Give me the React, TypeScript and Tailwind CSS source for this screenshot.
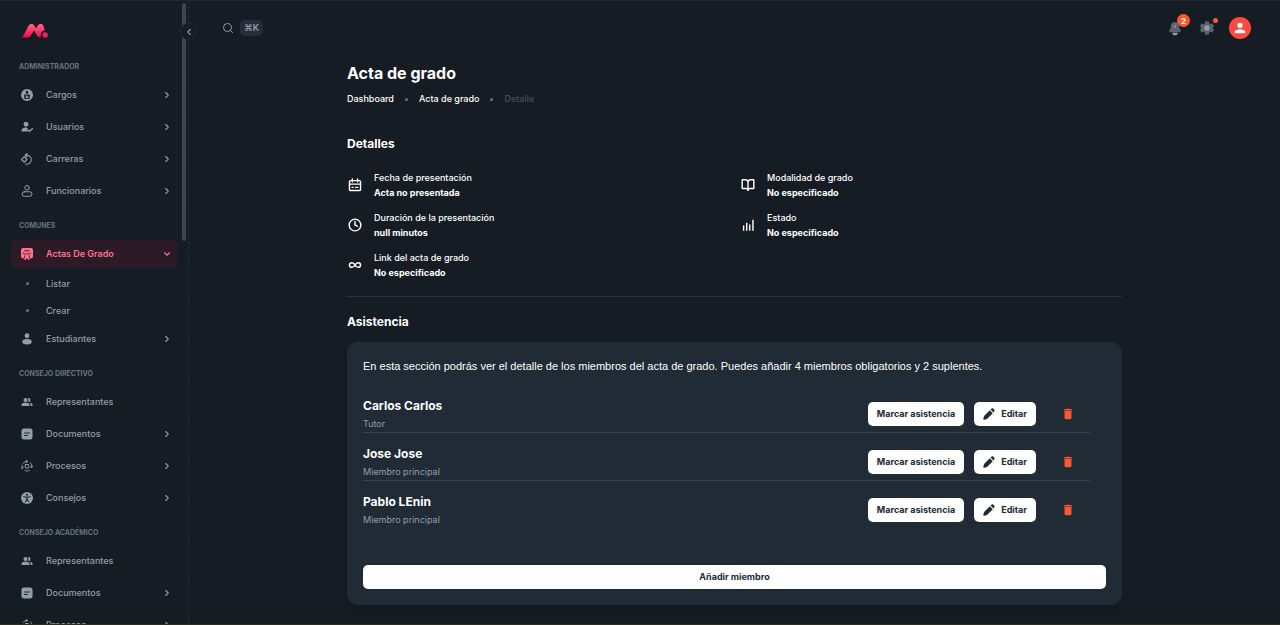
import React from 'react';
import type { IconType } from 'react-icons';
import { MdDelete, MdPeopleAlt, MdPerson } from 'react-icons/md';
import { BookOpen, ChevronDown, ChevronLeft, ChevronRight, Clock, Search } from 'lucide-react';

type Glyph = () => React.ReactElement;

const svgBase = { viewBox: '0 0 24 24', className: 'size-full', 'aria-hidden': true } as const;
const line = {
  fill: 'none',
  stroke: 'currentColor',
  strokeWidth: 2,
  strokeLinecap: 'round',
  strokeLinejoin: 'round',
} as const;

const CargoIcon: Glyph = () => (
  <svg {...svgBase}>
    <path
      fill="currentColor"
      fillRule="evenodd"
      d="M12 0a12 12 0 1 0 0 24 12 12 0 0 0 0-24Zm0 3.500a2.500 2.500 0 0 1 2.500 2.500v1a2.500 2.500 0 0 1-5 0V6A2.500 2.500 0 0 1 12 3.500ZM6.500 11h11v9h-11v-9Zm3 2v5.500h5.500V15h-2.500v-2h-3Z"
    />
  </svg>
);

const UserCheckIcon: Glyph = () => (
  <svg {...svgBase}>
    <circle cx="10" cy="6.500" r="4.800" fill="currentColor" />
    <path fill="currentColor" d="M1 21c0-5 3-8 8-8 2 0 4 .5 5 1.500l-2 2.500 4 4H1Z" />
    <path {...line} strokeWidth={2.400} d="m15 18 2.500 2.500L23 15" />
  </svg>
);

const CareerIcon: Glyph = () => (
  <svg {...svgBase}>
    <path
      {...line}
      strokeWidth={2.200}
      d="M10 4.500a9 9 0 1 1-1 17.500M1 13l5.500-5.500L12 13l-5.500 5.500L1 13ZM12 1 8.500 4.500 12 8M8.500 4.500H13"
    />
  </svg>
);

const OfficialIcon: Glyph = () => (
  <svg {...svgBase}>
    <circle cx="12" cy="5.500" r="4.500" {...line} />
    <rect x="2" y="13.500" width="20" height="9" rx="4.500" {...line} />
  </svg>
);

const ActaIcon: Glyph = () => (
  <svg {...svgBase}>
    <path
      fill="currentColor"
      fillRule="evenodd"
      d="M4 0h16a4 4 0 0 1 4 4v13a4 4 0 0 1-4 4h-1l-2-5a6 6 0 0 0-10 0l-2 5H4a4 4 0 0 1-4-4V4a4 4 0 0 1 4-4Zm3 4.500v2h10v-2H7ZM4 9.500v2h3v-2H4Zm13 0v2h3v-2h-3Z"
    />
    <path fill="currentColor" d="M12 10a4 4 0 0 1 3.500 6l2.500 7-3 1-3-4-3 4-3-1 2.500-7A4 4 0 0 1 12 10Z" />
    <path d="M7.500 15c-1-5 10-5 9 0" fill="none" stroke="#2c1a27" strokeWidth="1.500" />
  </svg>
);

const StudentIcon: Glyph = () => (
  <svg {...svgBase}>
    <circle cx="12" cy="5.500" r="4.800" fill="currentColor" />
    <ellipse cx="12" cy="17.500" rx="9.500" ry="5.500" fill="currentColor" />
  </svg>
);

const DocumentIcon: Glyph = () => (
  <svg {...svgBase}>
    <rect x="1" y="1" width="22" height="22" rx="5" fill="currentColor" />
    <path d="M7 10h10M7 15h6" fill="none" stroke="#161c24" strokeWidth="1.800" strokeLinecap="round" />
  </svg>
);

const ProcessIcon: Glyph = () => (
  <svg {...svgBase}>
    <path
      {...line}
      strokeWidth={1.800}
      d="M4 7a10 10 0 0 1 9-4.500M10 .500l3 2-2.500 3M19 5.500a10 10 0 0 1 2.500 9M23 12l-1.500 3-3-1M17 21a10 10 0 0 1-9 .5M2.500 17A10 10 0 0 1 2 11M.500 16l2.500 1 1.500-3"
    />
    <rect x="8.500" y="9" width="7" height="7" rx="1" {...line} />
  </svg>
);

const CouncilIcon: Glyph = () => (
  <svg {...svgBase}>
    <circle cx="12" cy="12" r="12" fill="currentColor" />
    <circle cx="12" cy="5.500" r="2" fill="#161c24" />
    <path
      d="m5.500 9 4.500 1.500h4L18.500 9M12 10.500V15m-3 5 3-6 3 6"
      fill="none"
      stroke="#161c24"
      strokeWidth="2"
      strokeLinecap="round"
    />
  </svg>
);

const CalendarIcon: Glyph = () => (
  <svg {...svgBase}>
    <path
      {...line}
      strokeWidth={2.400}
      d="M4.500 4.500h15a2 2 0 0 1 2 2v13a2 2 0 0 1-2 2h-15a2 2 0 0 1-2-2v-13a2 2 0 0 1 2-2ZM7.500 1.500v5M16.500 1.500v5M2.500 10.500h19M7 16h2M13 16h4"
    />
  </svg>
);

const LinkIcon: Glyph = () => (
  <svg {...svgBase}>
    <path
      {...line}
      strokeWidth={2.600}
      d="M12 12c-1.500-3-3-4-5.500-4a4 4 0 0 0 0 8c2.500 0 4-1 5.500-4s3-4 5.500-4a4 4 0 0 1 0 8c-2.500 0-4-1-5.500-4Z"
    />
  </svg>
);

const BarsIcon: Glyph = () => (
  <svg {...svgBase}>
    <path d="M4.500 13v9M9.800 8v14M15 11v11M20.500 3v19" fill="none" stroke="currentColor" strokeWidth="2.400" />
  </svg>
);

const PencilIcon: Glyph = () => (
  <svg {...svgBase}>
    <path
      fill="currentColor"
      d="M13.500 4.500 19.500 10.500 8.500 21.500c-.8.800-5 2-7.800 2 0-2.800 1.200-7 2-7.800L13.500 4.500ZM15 3l1-1c2-2 4.300-1.500 5.700-.1s1.900 3.900 0 5.800L21 9 15 3Z"
    />
  </svg>
);

const wrap = (Icon: IconType): Glyph => () => <Icon className="size-full" aria-hidden />;
const PeopleIcon = wrap(MdPeopleAlt);

type Item = { label: string; icon: Glyph; expandable?: boolean; children?: string[] };
type Section = { title: string; items: Item[] };

const sections: Section[] = [
  {
    title: 'Administrador',
    items: [
      { label: 'Cargos', icon: CargoIcon, expandable: true },
      { label: 'Usuarios', icon: UserCheckIcon, expandable: true },
      { label: 'Carreras', icon: CareerIcon, expandable: true },
      { label: 'Funcionarios', icon: OfficialIcon, expandable: true },
    ],
  },
  {
    title: 'Comunes',
    items: [
      { label: 'Actas De Grado', icon: ActaIcon, expandable: true, children: ['Listar', 'Crear'] },
      { label: 'Estudiantes', icon: StudentIcon, expandable: true },
    ],
  },
  {
    title: 'Consejo directivo',
    items: [
      { label: 'Representantes', icon: PeopleIcon },
      { label: 'Documentos', icon: DocumentIcon, expandable: true },
      { label: 'Procesos', icon: ProcessIcon, expandable: true },
      { label: 'Consejos', icon: CouncilIcon, expandable: true },
    ],
  },
  {
    title: 'Consejo académico',
    items: [
      { label: 'Representantes', icon: PeopleIcon },
      { label: 'Documentos', icon: DocumentIcon, expandable: true },
      { label: 'Procesos', icon: ProcessIcon, expandable: true },
    ],
  },
];

function NavItem({ item }: { item: Item }) {
  const open = Boolean(item.children);
  const Icon = item.icon;
  return (
    <li>
      <button
        type="button"
        aria-expanded={item.expandable ? open : undefined}
        className={
          open
            ? 'flex h-7 w-full items-center rounded-md bg-[#2c1a27] pr-[5px] pl-2.5 text-[9px] font-semibold text-[#ff708b]'
            : 'flex h-7 w-full items-center rounded-md pr-[5px] pl-2.5 text-[9px] font-medium text-[#919eab]'
        }
      >
        <span className="mr-[13px] size-3 shrink-0">
          <Icon />
        </span>
        <span className="flex-1 text-left">{item.label}</span>
        {item.expandable &&
          (open ? (
            <ChevronDown className="size-2.5" strokeWidth={2.600} />
          ) : (
            <ChevronRight className="size-2.5" strokeWidth={2.600} />
          ))}
      </button>
      {item.children && (
        <ul className="mt-0.5 -mb-[3px]">
          {item.children.map((child) => (
            <li key={child}>
              <a href="#" className="flex h-[27px] items-center pl-2.5 text-[9px] font-medium text-[#919eab]">
                <span className="mr-[13px] flex w-3 justify-center">
                  <span className="size-[3px] rounded-full bg-[#637381]" />
                </span>
                {child}
              </a>
            </li>
          ))}
        </ul>
      )}
    </li>
  );
}

function Sidebar() {
  return (
    <aside className="relative flex w-[189px] shrink-0 border-r border-dashed border-[#252d36]">
      <div className="flex-1 overflow-hidden px-[11px]">
        <a href="#" aria-label="Inicio" className="mt-[22px] ml-[11px] block w-[26px]">
          <svg viewBox="0 0 26 15" className="h-[15px] w-[26px]" aria-hidden>
            <defs>
              <linearGradient id="brand" x1="0" y1="0" x2="0" y2="1">
                <stop offset="0" stopColor="#ff6685" />
                <stop offset="1" stopColor="#f5064a" />
              </linearGradient>
            </defs>
            <path
              fill="url(#brand)"
              d="M.4 14.600 6.500 2.800C7.600.7 10.500.2 12 2.200l2 3 2-2.800C17.600.2 20.500.5 21.500 2.800l1.200 4.500c-2.300.3-3.800 2.100-3.800 4.400 0 .9.200 1.600-.3 2.100-1 .8-2.200.5-3-.6L12 7.500l-3.200 5c-1 1.600-2.300 2.100-3.800 2.100H.4Z"
            />
            <circle cx="23.200" cy="12" r="2.700" fill="#fb1e56" />
          </svg>
        </a>
        <nav aria-label="Principal" className="mt-[13px]">
          {sections.map((section) => (
            <section key={section.title} className="mb-[5px]">
              <h2 className="px-2 pt-2.5 pb-2 text-[7px] leading-3 font-bold text-[#637381] uppercase">{section.title}</h2>
              <ul className="flex flex-col gap-1">
                {section.items.map((item) => (
                  <NavItem key={item.label} item={item} />
                ))}
              </ul>
            </section>
          ))}
        </nav>
      </div>
      <div className="absolute top-0.5 right-[2px] h-[238px] w-1 rounded-full bg-[#3b4651]" />
      <button
        type="button"
        aria-label="Contraer menú"
        className="absolute top-[22px] -right-[9px] flex size-[17px] items-center justify-center rounded-full border border-dashed border-[#29323b] bg-[#161c24] text-[#919eab]"
      >
        <ChevronLeft className="size-2.5" strokeWidth={2.600} />
      </button>
    </aside>
  );
}

function TopBar() {
  return (
    <header className="flex h-[54px] shrink-0 items-center justify-between pr-[29px] pl-[33px]">
      <div className="flex items-center gap-1.5">
        <button type="button" aria-label="Buscar" className="text-[#919eab]">
          <Search className="size-3" />
        </button>
        <kbd className="flex h-4 items-center rounded-[5px] bg-[#252d37] px-1 font-[Inter,'DejaVu_Sans',sans-serif] text-[9px] font-semibold text-[#919eab]">
          ⌘K
        </kbd>
      </div>
      <div className="flex items-center gap-4">
        <button type="button" aria-label="Notificaciones" className="relative size-4">
          <svg viewBox="0 0 24 24" className="size-4" aria-hidden>
            <path
              fill="#59636e"
              d="M12 3a6.500 6.500 0 0 0-6.500 6.500V12l-2 3.500c-.8 1.500 0 3 1.800 3h13.400c1.800 0 2.600-1.500 1.800-3l-2-3.500V9.500A6.500 6.500 0 0 0 12 3Z"
            />
            <path fill="#919eab" d="M8 19h8a4 4 0 0 1-8 0ZM11 7h2v5h-2z" />
          </svg>
          <span className="absolute -top-1.5 -right-[7px] flex size-[13px] items-center justify-center rounded-full bg-[#ff5630] text-[8px] font-bold text-white">
            2
          </span>
        </button>
        <button type="button" aria-label="Ajustes" className="relative size-4">
          <svg viewBox="0 0 24 24" className="size-4" aria-hidden>
            <path
              fill="#59636e"
              d="M9.500 2h5l.7 3 2 1.200 3-.9 2.400 4.200L20.400 12l2.200 2.500-2.400 4.200-3-.9-2 1.200-.7 3h-5l-.7-3-2-1.200-3 .9-2.400-4.200L3.600 12 1.400 9.500l2.400-4.200 3 .9 2-1.200.7-3Z"
            />
            <circle cx="12" cy="12" r="4" fill="#919eab" />
          </svg>
          <span className="absolute -top-0.5 -right-[3px] size-[5px] rounded-full bg-[#ff5630]" />
        </button>
        <button
          type="button"
          aria-label="Cuenta"
          className="-ml-0.5 flex size-[22px] items-center justify-center rounded-full bg-[#ff4842] text-white"
        >
          <MdPerson className="size-4" />
        </button>
      </div>
    </header>
  );
}

const ClockIcon: Glyph = () => <Clock className="size-full" strokeWidth={2.400} aria-hidden />;
const BookIcon: Glyph = () => <BookOpen className="size-full" strokeWidth={2.400} aria-hidden />;

const detailColumns: { label: string; value: string; icon: Glyph }[][] = [
  [
    { label: 'Fecha de presentación', value: 'Acta no presentada', icon: CalendarIcon },
    { label: 'Duración de la presentación', value: 'null minutos', icon: ClockIcon },
    { label: 'Link del acta de grado', value: 'No especificado', icon: LinkIcon },
  ],
  [
    { label: 'Modalidad de grado', value: 'No especificado', icon: BookIcon },
    { label: 'Estado', value: 'No especificado', icon: BarsIcon },
  ],
];

const members = [
  { name: 'Carlos Carlos', role: 'Tutor' },
  { name: 'Jose Jose', role: 'Miembro principal' },
  { name: 'Pablo LEnin', role: 'Miembro principal' },
];

const buttonClass =
  'flex h-6 items-center justify-center rounded-[5px] bg-white px-[9px] text-[9px] font-bold whitespace-nowrap text-[#212b36]';

export default function App() {
  return (
    <div className="flex h-screen overflow-hidden border-t border-b border-t-[#212830] border-b-[#2c2d1e] bg-[#161c24] font-[Inter,'Liberation_Sans',sans-serif] text-white">
      <Sidebar />
      <div className="flex min-w-0 flex-1 flex-col">
        <TopBar />
        <main className="mx-auto w-full max-w-[807px] px-4 pt-2 pb-4">
          <h1 className="text-base leading-5 font-bold">Acta de grado</h1>
          <nav aria-label="Ruta" className="mt-2 flex h-4 items-center gap-[11px] text-[9px] font-medium">
            <a href="#">Dashboard</a>
            <span className="size-[3px] rounded-full bg-[#637381]" />
            <a href="#">Acta de grado</a>
            <span className="size-[3px] rounded-full bg-[#637381]" />
            <span className="text-[#454f5b]">Detalle</span>
          </nav>

          <h2 className="mt-[29px] text-xs leading-4 font-bold">Detalles</h2>
          <div className="mt-[18px] grid grid-cols-2 gap-x-[11px] border-b border-[#29323b] pb-4">
            {detailColumns.map((column, index) => (
              <dl key={index} className="flex flex-col gap-2.5">
                {column.map(({ label, value, icon: Icon }) => (
                  <div key={label} className="grid grid-cols-[16px_1fr] items-center gap-x-[11px] text-[9px] leading-[15px]">
                    <dt className="col-start-2 font-medium">{label}</dt>
                    <dd className="col-start-2 font-bold">{value}</dd>
                    <dd className="col-start-1 row-span-2 row-start-1 size-4 p-px" aria-hidden>
                      <Icon />
                    </dd>
                  </div>
                ))}
              </dl>
            ))}
          </div>

          <h2 className="mt-[17px] text-xs leading-4 font-bold">Asistencia</h2>
          <section className="mt-3 rounded-[11px] bg-[#212b36] p-4 shadow-lg">
            <p className="font-['Liberation_Sans',Arial,sans-serif] text-[11px] leading-4">
              En esta sección podrás ver el detalle de los miembros del acta de grado. Puedes añadir 4 miembros obligatorios y 2
              suplentes.
            </p>
            <ul className="mt-[11px] mr-4">
              {members.map((member) => (
                <li
                  key={member.name}
                  className="flex h-12 items-end justify-between border-b border-[#37424d] last:border-transparent"
                >
                  <div>
                    <h3 className="text-xs leading-5 font-bold">{member.name}</h3>
                    <p className="text-[9px] leading-4 text-[#919eab]">{member.role}</p>
                  </div>
                  <div className="flex items-center pb-1.5">
                    <button type="button" className={buttonClass}>
                      Marcar asistencia
                    </button>
                    <button type="button" className={`${buttonClass} ml-2.5 gap-1.5`}>
                      <span className="size-3">
                        <PencilIcon />
                      </span>
                      Editar
                    </button>
                    <button type="button" aria-label={`Eliminar a ${member.name}`} className="mr-[15px] ml-[25px] text-[#ff5630]">
                      <MdDelete className="size-3.5" />
                    </button>
                  </div>
                </li>
              ))}
            </ul>
            <button type="button" className={`${buttonClass} mt-9 w-full`}>
              Añadir miembro
            </button>
          </section>
        </main>
      </div>
    </div>
  );
}
